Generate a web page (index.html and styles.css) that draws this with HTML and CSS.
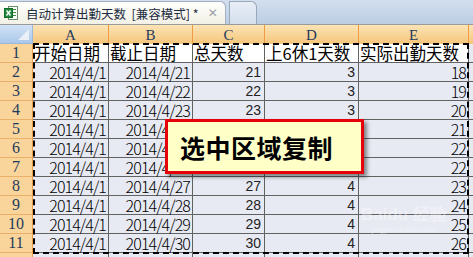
FILE: index.html
```html
<!DOCTYPE html>
<html lang="zh">
<head>
<meta charset="utf-8">
<link rel="stylesheet" href="styles.css">
</head>
<body>
<div class="tabbar">
  <div class="tab active">
    <svg class="xlicon" width="14" height="14" viewBox="0 0 14 14">
      <rect x="4.5" y="0.5" width="9" height="13" fill="#fff" stroke="#6b8f6b"/>
      <line x1="7" y1="3.5" x2="12" y2="3.5" stroke="#3c8f3c"/>
      <line x1="7" y1="6.5" x2="12" y2="6.5" stroke="#3c8f3c"/>
      <line x1="7" y1="9.5" x2="12" y2="9.5" stroke="#3c8f3c"/>
      <rect x="0.5" y="2.5" width="8" height="9" fill="#1f8a3a" stroke="#146b2a"/>
      <path d="M2.5 4.5 L6.5 9.5 M6.5 4.5 L2.5 9.5" stroke="#fff" stroke-width="1.4"/>
    </svg>
    <span class="title">自动计算出勤天数&nbsp;&nbsp;[兼容模式] *</span>
    <span class="close">✕</span>
  </div>
  <div class="tab blank"></div>
</div>
<div class="sheet">
  <div class="hd corner"></div>
  <div class="hd">A</div><div class="hd">B</div><div class="hd">C</div><div class="hd">D</div><div class="hd">E</div><div class="hd fill"></div>

  <div class="rh">1</div>
  <div class="c first t">开始日期</div><div class="c first t">截止日期</div><div class="c first t">总天数</div><div class="c first t">上6休1天数</div><div class="c first t">实际出勤天数</div><div class="c pad"></div>

  <div class="rh">2</div><div class="c d">2014/4/1</div><div class="c d">2014/4/21</div><div class="c n">21</div><div class="c n">3</div><div class="c d">18</div><div class="c pad"></div>
  <div class="rh">3</div><div class="c d">2014/4/1</div><div class="c d">2014/4/22</div><div class="c n">22</div><div class="c n">3</div><div class="c d">19</div><div class="c pad"></div>
  <div class="rh">4</div><div class="c d">2014/4/1</div><div class="c d">2014/4/23</div><div class="c n">23</div><div class="c n">3</div><div class="c d">20</div><div class="c pad"></div>
  <div class="rh">5</div><div class="c d">2014/4/1</div><div class="c d">2014/4/24</div><div class="c n">24</div><div class="c n">3</div><div class="c d">21</div><div class="c pad"></div>
  <div class="rh">6</div><div class="c d">2014/4/1</div><div class="c d">2014/4/25</div><div class="c n">25</div><div class="c n">3</div><div class="c d">22</div><div class="c pad"></div>
  <div class="rh">7</div><div class="c d">2014/4/1</div><div class="c d">2014/4/26</div><div class="c n">26</div><div class="c n">4</div><div class="c d">22</div><div class="c pad"></div>
  <div class="rh">8</div><div class="c d">2014/4/1</div><div class="c d">2014/4/27</div><div class="c n">27</div><div class="c n">4</div><div class="c d">23</div><div class="c pad"></div>
  <div class="rh">9</div><div class="c d">2014/4/1</div><div class="c d">2014/4/28</div><div class="c n">28</div><div class="c n">4</div><div class="c d">24</div><div class="c pad"></div>
  <div class="rh">10</div><div class="c d">2014/4/1</div><div class="c d">2014/4/29</div><div class="c n">29</div><div class="c n">4</div><div class="c d">25</div><div class="c pad"></div>
  <div class="rh">11</div><div class="c d">2014/4/1</div><div class="c d">2014/4/30</div><div class="c n">30</div><div class="c n">4</div><div class="c d">26</div><div class="c pad"></div>
  <div class="rh"></div><div class="c"></div><div class="c"></div><div class="c"></div><div class="c"></div><div class="c"></div><div class="c pad"></div>

  <div class="ants"></div>
  <div class="label">选中区域复制</div>
  <div class="watermark"><span class="wm-big">Baidu 经验</span><span class="wm-small">jingyan.baidu.com</span></div>
</div>
</body>
</html>
```
FILE: styles.css
```css
html, body {
  margin: 0;
  padding: 0;
}
body {
  width: 473px;
  height: 257px;
  overflow: hidden;
  background: #e8eaf3;
  font-family: "Noto Sans CJK SC", sans-serif;
}

.tabbar {
  height: 25px;
  box-sizing: border-box;
  border-bottom: 1px solid #9a9a9a;
  background: linear-gradient(#d3dfee, #bccde3);
  display: flex;
  align-items: flex-end;
  gap: 3px;
}
.tab {
  box-sizing: border-box;
  height: 23px;
  border: 1px solid #a3b1c4;
  border-bottom: none;
  border-radius: 0 6px 0 0;
}
.tab.active {
  width: 226px;
  background: linear-gradient(#fefefc, #f3f1e6);
  display: flex;
  align-items: center;
  padding-left: 4px;
  border-left: none;
}
.tab.blank {
  width: 28px;
  background: linear-gradient(#e8eef6, #d4dfec);
  border-color: #9aa8ba;
}
.xlicon {
  flex: none;
  margin-right: 8px;
  margin-top: -1px;
}
.title {
  font-size: 12.5px;
  color: #1b2b40;
  white-space: nowrap;
}
.close {
  margin-left: 9px;
  font-size: 12px;
  font-weight: bold;
  color: #9aa0a8;
  font-family: "DejaVu Sans", sans-serif;
}

.sheet {
  position: relative;
  height: 232px;
  overflow: hidden;
  display: grid;
  grid-template-columns: 33px 76px 84px 72px 94px 110px 4px;
  grid-auto-rows: 19px;
}
.hd {
  box-sizing: border-box;
  background: linear-gradient(#fbe4b6, #f5c57a);
  border-right: 1px solid #f09b3f;
  color: #1f3b5c;
  font-family: "Liberation Serif", serif;
  font-size: 15px;
  display: flex;
  align-items: center;
  justify-content: center;
  padding-top: 1px;
}
.hd.corner {
  position: relative;
  background: linear-gradient(#d2e3f6, #aac7ea);
  border-right: 1px solid #9db8d8;
  border-bottom: 1px solid #9db8d8;
}
.hd.corner::after {
  content: "";
  position: absolute;
  right: 3px;
  bottom: 3px;
  width: 0;
  height: 0;
  border-left: 11px solid transparent;
  border-bottom: 11px solid #e9f0f8;
}
.hd.fill {
  border-right: none;
}
.rh {
  box-sizing: border-box;
  background: #f9d59b;
  border-right: 1px solid #ef9e45;
  border-bottom: 1px solid #eab06a;
  color: #1f3b5c;
  font-family: "Liberation Serif", serif;
  font-size: 16px;
  display: flex;
  align-items: flex-end;
  justify-content: center;
  line-height: 18px;
}
.c {
  box-sizing: border-box;
  background: #e8eaf3;
  border-right: 1px solid #626262;
  border-bottom: 1px solid #626262;
  display: flex;
  align-items: flex-end;
  justify-content: flex-end;
  padding-right: 2px;
  color: #000;
  white-space: nowrap;
  line-height: 18px;
}
.c.first {
  background: #fff;
}
.c.pad {
  border-right: none;
  background: #e6e9ef;
}
.c.t {
  justify-content: flex-start;
  padding-left: 1px;
  font-size: 16.5px;
  line-height: 18px;
}
.c.d {
  font-family: "Noto Sans CJK SC", sans-serif;
  font-size: 16px;
  font-weight: 300;
  letter-spacing: -0.9px;
}
.c.n {
  font-family: "Liberation Sans", sans-serif;
  font-size: 14px;
  font-weight: 400;
  color: #222;
  padding-right: 3px;
}

.ants {
  position: absolute;
  left: 33px;
  top: 18px;
  width: 436px;
  height: 211px;
  box-sizing: border-box;
  border: 2px dashed #000;
  pointer-events: none;
}
.label {
  position: absolute;
  left: 165px;
  top: 94px;
  width: 199px;
  height: 55px;
  box-sizing: border-box;
  background: #ffffc8;
  border: 3px solid #e5000a;
  box-shadow: 3px 3px 4px rgba(0, 0, 0, 0.45);
  font-size: 25px;
  font-weight: 700;
  color: #000;
  display: flex;
  align-items: center;
  padding-left: 12px;
  letter-spacing: 0.5px;
}
.watermark {
  position: absolute;
  left: 362px;
  top: 180px;
  width: 84px;
  display: flex;
  flex-direction: column;
  align-items: center;
  color: rgba(255, 255, 255, 0.4);
  pointer-events: none;
}
.wm-big {
  font-family: "Liberation Sans", sans-serif;
  font-size: 17px;
  font-weight: bold;
  line-height: 20px;
  white-space: nowrap;
}
.wm-small {
  font-family: "Liberation Sans", sans-serif;
  font-size: 8px;
  line-height: 10px;
  white-space: nowrap;
}
```
